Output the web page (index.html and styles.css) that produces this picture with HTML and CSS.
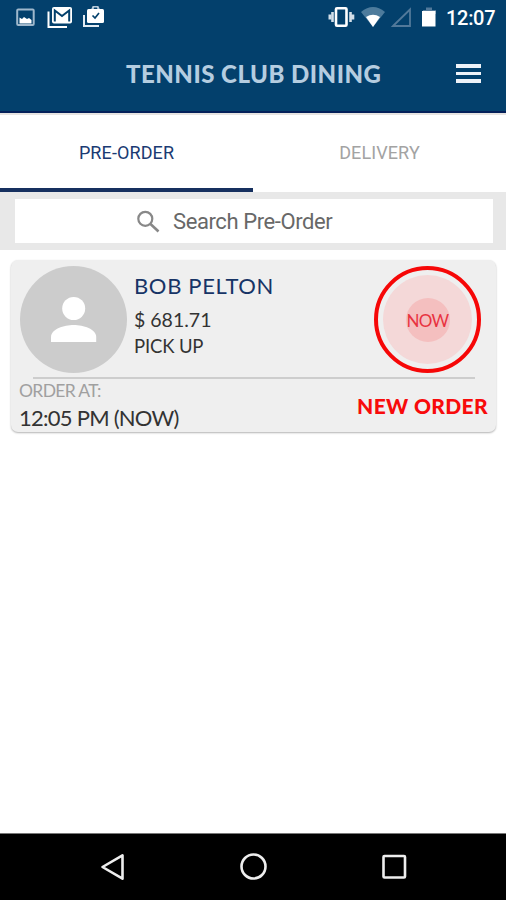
FILE: index.html
```
<!DOCTYPE html>
<html lang="en">
<head>
  <meta charset="UTF-8" />
  <meta name="viewport" content="width=device-width, initial-scale=1.0" />
  <title>Tennis Club Dining</title>
  <link rel="stylesheet" href="styles.css">
</head>
<body>
  <header class="header">
    <div class="status-bar">
      <svg class="notifications" width="90" height="26" viewBox="0 0 90 26">
        <rect x="1.2" y="3.6" width="16.500" height="15.500" rx="1" fill="none" stroke="#9fb8cc" stroke-width="2" />
        <path d="M3.500 17.500v-6l2.500 1.500 2-2 3 2 2-1 2.500 2v3.500z" fill="#fff" />
        <path d="M32.500 5.500v15.500h18.500" fill="none" stroke="#fff" stroke-width="2" />
        <rect x="36" y="1" width="20" height="16.500" rx="2" fill="#fff" />
        <path d="M38.800 15.500V4.500L46 10l7.200-5.500v11" fill="none" stroke="#03406c" stroke-width="2" />
        <path d="M68 9v11h15" fill="none" stroke="#e4ecf3" stroke-width="2" />
        <path d="M76 4l1.500-3.500h4L83 4" fill="none" stroke="#b9cbdb" stroke-width="2" />
        <rect x="71" y="3" width="17" height="14" rx="1.500" fill="#fff" />
        <path d="M76.500 9.500l2.500 2.500 4-5" fill="none" stroke="#03406c" stroke-width="1.700" />
      </svg>
      <div class="status-right">
        <svg width="110" height="24" viewBox="0 0 110 24">
          <path d="M1.800 8.500v5M4.500 6v10M22.500 6v10M25 8.500v5" stroke="#d3dfe9" stroke-width="2.600" />
          <rect x="8" y="2.200" width="10.500" height="17.500" rx="1" fill="none" stroke="#fff" stroke-width="2.600" />
          <path d="M33 6q12-10 24 0L45 21z" fill="#4d7b9c" />
          <path d="M38 11q7-4.500 14 0L45 21z" fill="#fff" />
          <path d="M65 20L82 3.500V20z" fill="none" stroke="#52799a" stroke-width="1.800" />
          <path d="M98 1.500h6V4h4v4H95V4h3z" fill="#52799a" />
          <path d="M94 5h13.500v15.500H94z" fill="#fff" />
        </svg>
        <span class="clock">12:07</span>
      </div>
    </div>
    <div class="title-bar">
      <h1 class="title">TENNIS CLUB DINING</h1>
      <button class="menu-btn" aria-label="Menu"><span></span><span></span><span></span></button>
    </div>
  </header>

  <nav class="tabs">
    <a class="tab active"><span>PRE-ORDER</span></a>
    <a class="tab"><span>DELIVERY</span></a>
  </nav>

  <div class="search">
    <div class="search-box">
      <svg width="24" height="24" viewBox="0 0 24 24">
        <circle cx="9.300" cy="8.800" r="7" fill="none" stroke="#888" stroke-width="2.200" />
        <path d="M14.500 14l8 7.500" stroke="#888" stroke-width="2.600" />
      </svg>
      <span>Search Pre-Order</span>
    </div>
  </div>

  <main class="orders">
    <div class="card">
      <div class="card-top">
        <svg class="avatar" width="107" height="107" viewBox="0 0 107 107">
          <circle cx="53.500" cy="53.500" r="53.500" fill="#ccc" />
          <circle cx="53.700" cy="42.500" r="11.500" fill="#fff" />
          <path d="M31 76v-5c0-8 13-12 22.700-12s22.500 4 22.500 12v5z" fill="#fff" />
        </svg>
        <div class="info">
          <div class="name">BOB PELTON</div>
          <div class="price">$ 681.71</div>
          <div class="type">PICK UP</div>
        </div>
        <div class="timer"><div class="timer-fill"><div class="timer-dot"><span>NOW</span></div></div></div>
      </div>
      <div class="divider"></div>
      <div class="card-bottom">
        <div>
          <div class="label">ORDER AT:</div>
          <div class="time">12:05 PM (NOW)</div>
        </div>
        <div class="status">NEW ORDER</div>
      </div>
    </div>
  </main>

  <footer class="nav-bar">
    <svg width="28" height="30" viewBox="0 0 28 30"><path d="M3.500 15L23.500 3.300v23.400z" fill="none" stroke="#eee" stroke-width="2.600" stroke-linejoin="round" /></svg>
    <svg width="28" height="30" viewBox="0 0 28 30"><circle cx="13.500" cy="14.500" r="12" fill="none" stroke="#eee" stroke-width="2.600" /></svg>
    <svg width="28" height="30" viewBox="0 0 28 30"><rect x="3.500" y="4" width="21.500" height="21.500" rx="1" fill="none" stroke="#eee" stroke-width="2.600" /></svg>
  </footer>
</body>
</html>
```
FILE: styles.css
```
* {
  box-sizing: border-box;
}
body {
  margin: 0;
  height: 900px;
  display: flex;
  flex-direction: column;
  font-family: Lato, "Liberation Sans", sans-serif;
  background-color: #fff;
  white-space: nowrap;
  overflow: hidden;
}
svg {
  display: block;
  flex: none;
}
.header {
  height: 113px;
  background-color: #03406c;
  border-bottom: 2px solid #04205a;
  color: #fff;
}
.status-bar {
  height: 36px;
  padding: 6px 10px 0 16px;
  display: flex;
  justify-content: space-between;
}
.status-right {
  display: flex;
  gap: 8px;
}
.clock {
  font: 500 20px/25px Roboto, sans-serif;
  width: 50px;
  letter-spacing: -0.3px;
}
.title-bar {
  height: 75px;
  padding: 0 25px 0 126px;
  display: flex;
  align-items: center;
  justify-content: space-between;
}
.title {
  margin: 0;
  font-size: 24px;
  line-height: 30px;
  font-weight: 900;
  letter-spacing: 0.5px;
  color: #b5cde0;
}
.menu-btn {
  width: 25px;
  padding: 0;
  border: 0;
  background: none;
  display: flex;
  flex-direction: column;
  gap: 4px;
}
.menu-btn span {
  height: 3.500px;
  background-color: #eef2f8;
}
.tabs {
  height: 79px;
  display: flex;
  border-top: 2px solid #e6e3e1;
}
.tab {
  width: 254px;
  padding-top: 3px;
  display: flex;
  align-items: center;
  justify-content: center;
  font: 18px/24px Roboto, sans-serif;
  letter-spacing: 0.1px;
  color: #a3a3a3;
  border-bottom: 4px solid transparent;
}
.tab.active {
  color: #1b3b73;
  border-color: #16305f;
}
.search {
  height: 58px;
  padding: 7px 13px 7px 15px;
  background-color: #e8e8e8;
}
.search-box {
  height: 44px;
  padding: 1px 0 0 121px;
  display: flex;
  align-items: center;
  gap: 13px;
  background-color: #fff;
  font: 22px/26px Roboto, sans-serif;
  letter-spacing: -0.4px;
  color: #686868;
}
.orders {
  flex: 1;
  padding: 10px 10px 0 11px;
}
.card {
  height: 172px;
  padding: 6px 8px 0 8px;
  border-radius: 7px;
  background-color: #efefef;
  box-shadow: 0 1px 2px rgba(0, 0, 0, 0.3);
}
.card-top {
  height: 107px;
  padding: 0 7px 0 1px;
  display: flex;
}
.info {
  flex: 1;
  padding: 6px 0 0 7px;
  color: #333;
}
.name {
  font-size: 22px;
  line-height: 28px;
  letter-spacing: 0.65px;
  color: #173466;
}
.price {
  margin-top: 7px;
  font-size: 19.500px;
  line-height: 26px;
}
.type {
  font-size: 18.500px;
  line-height: 27px;
  letter-spacing: -0.15px;
}
.timer, .timer-fill, .timer-dot {
  display: flex;
  align-items: center;
  justify-content: center;
  border-radius: 50%;
}
.timer {
  width: 107px;
  height: 107px;
  border: 4px solid #f60707;
}
.timer-fill {
  width: 89px;
  height: 89px;
  background-color: #f4d8d8;
}
.timer-dot {
  width: 44px;
  height: 44px;
  padding-top: 1px;
  background-color: #f4bfbf;
  font-size: 17px;
  letter-spacing: -0.6px;
  color: #e8333f;
}
.divider {
  height: 2px;
  margin: 4px 13px 0 14px;
  background-color: #cdcdcd;
}
.card-bottom {
  display: flex;
  justify-content: space-between;
}
.label {
  margin-top: -1px;
  font-size: 17.500px;
  line-height: 26px;
  letter-spacing: -0.65px;
  color: #a0a0a0;
}
.time {
  font-size: 22px;
  line-height: 28px;
  letter-spacing: -0.75px;
  color: #333;
}
.status {
  margin-top: 13px;
  font-size: 21px;
  line-height: 28px;
  font-weight: 900;
  letter-spacing: 0.35px;
  color: #f80b0b;
}
.nav-bar {
  height: 67px;
  padding: 0 98px 0 99px;
  display: flex;
  align-items: center;
  justify-content: space-between;
  background-color: #000;
  border-top: 1px solid #777;
}
```
